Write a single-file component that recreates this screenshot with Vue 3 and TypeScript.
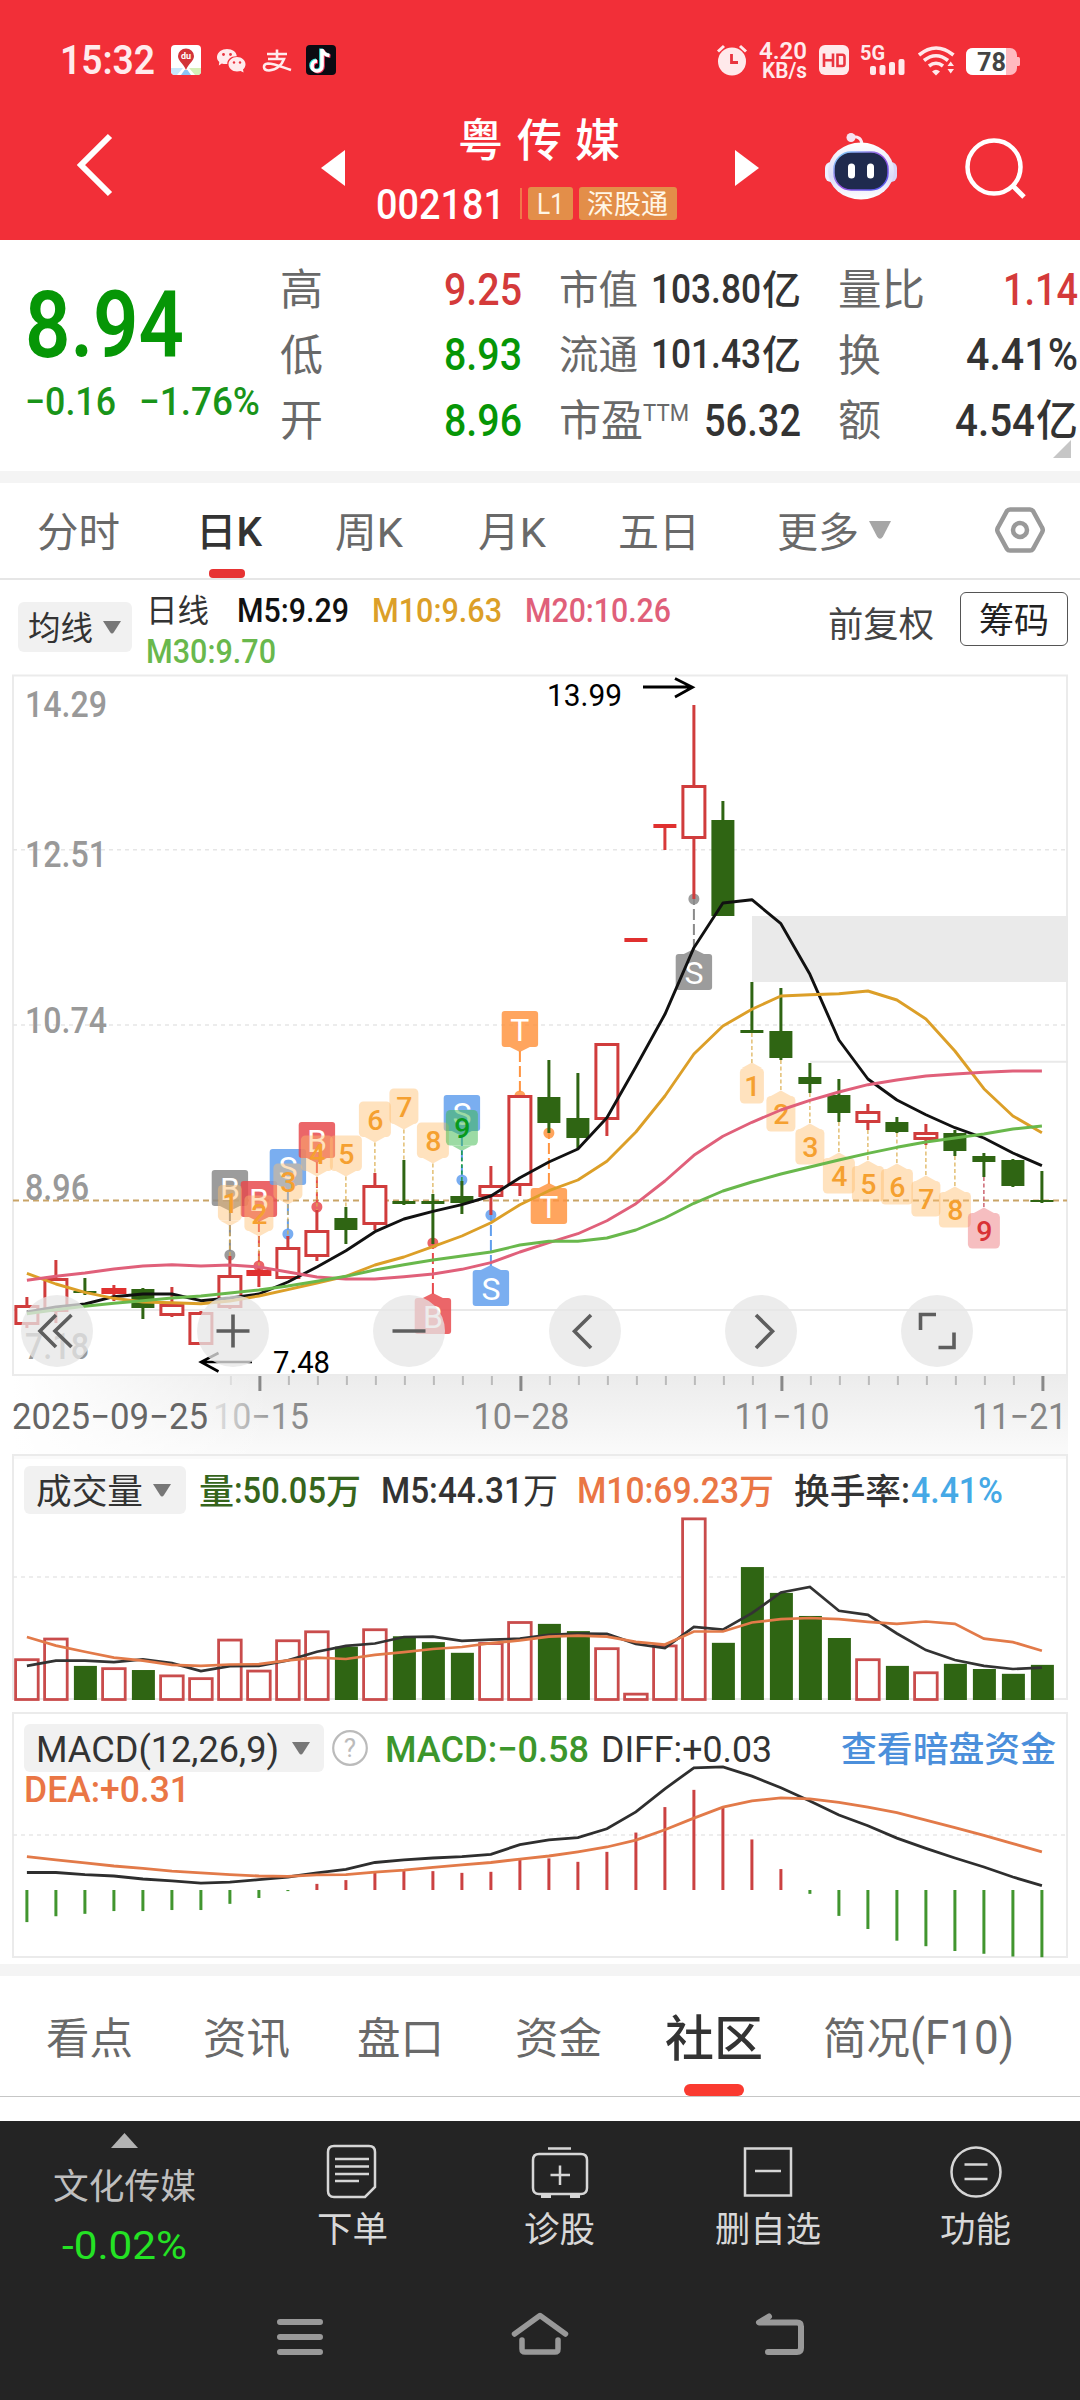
<script setup lang="ts">
import { h } from 'vue'

/* Single line of text set to an exact advance width. */
interface LabelProps {
  t: string
  w: number
  s: number
  b?: number
}
const Label = (p: LabelProps) => {
  const cjk = /[\u4e00-\u9fff]/.test(p.t)
  const base = Math.round(p.s * (cjk ? 0.76 : 0.711) * 10) / 10
  return h('svg', { width: p.w, height: base, style: 'display:block;flex:none;overflow:visible' }, [
    h(
      'text',
      {
        x: 0,
        y: base,
        textLength: p.w,
        lengthAdjust: 'spacingAndGlyphs',
        fill: 'currentColor',
        'font-family': "Roboto, 'Noto Sans CJK SC', sans-serif",
        'font-size': p.s,
        'font-weight': p.b ?? 400,
      },
      p.t,
    ),
  ])
}
Label.props = ['t', 'w', 's', 'b']

type Kind = 'r' | 'g' | 's'
const X = (i: number) => 26.9 + 29 * i

/* high, body top, body bottom, low, kind (r hollow red, s solid red, g green) */
const candles: [number, number, number, number, Kind][] = [
  [1297, 1305, 1325, 1328, 'r'], [1260, 1278, 1312, 1323, 'r'], [1278, 1291, 1293, 1295, 'g'],
  [1285, 1288, 1294, 1301, 's'], [1288, 1289, 1308, 1319, 'g'], [1287, 1304, 1316, 1317, 'r'],
  [1311, 1312, 1345, 1345, 'r'], [1256, 1275, 1308, 1309, 'r'], [1267, 1270, 1276, 1287, 's'],
  [1236, 1247, 1279, 1279, 'r'], [1210, 1230, 1257, 1261, 'r'], [1207, 1218, 1230, 1244, 'g'],
  [1173, 1185, 1225, 1230, 'r'], [1160, 1201, 1204, 1205, 'g'], [1194, 1201, 1204, 1244, 'g'],
  [1181, 1196, 1203, 1214, 'g'], [1166, 1185, 1197, 1215, 'r'], [1095, 1095, 1186, 1196, 'r'],
  [1060, 1097, 1123, 1133, 'g'], [1073, 1118, 1138, 1148, 'g'], [1043, 1043, 1120, 1136, 'r'],
  [938, 938, 942, 942, 's'], [824, 824, 828, 850, 's'], [705, 785, 839, 899, 'r'],
  [801, 820, 916, 916, 'g'], [982, 1030, 1033, 1033, 'g'], [988, 1031, 1058, 1060, 'g'],
  [1063, 1077, 1084, 1093, 'g'], [1079, 1095, 1113, 1122, 'g'], [1104, 1111, 1123, 1130, 'r'],
  [1117, 1122, 1132, 1133, 'g'], [1124, 1132, 1140, 1145, 'r'], [1130, 1133, 1151, 1156, 'g'],
  [1153, 1156, 1162, 1177, 'g'], [1159, 1160, 1186, 1187, 'g'], [1171, 1200, 1202, 1203, 'g'],
]

const toPoints = (ys: number[]) => ys.map((y, i) => `${X(i).toFixed(1)},${y.toFixed(1)}`).join(' ')

const ma5 = [1312, 1307, 1304, 1296.7, 1294, 1294, 1300.7, 1298, 1294, 1282, 1267, 1250.7, 1231.7, 1219, 1211.3, 1204.7, 1196, 1177.7, 1162, 1149, 1117.7, 1066.7, 1014.3, 947.7, 903, 899.7, 923.7, 974.3, 1040, 1079, 1100, 1114.7, 1127.7, 1138, 1153, 1165.7]
const ma10 = [1273.3, 1284, 1292.3, 1298.3, 1302, 1302.7, 1303.7, 1301, 1296, 1289.7, 1283, 1276.3, 1265, 1257, 1246.7, 1236, 1222.7, 1204.7, 1190.7, 1180, 1161.3, 1132, 1096, 1054, 1026, 1009.3, 996, 994.7, 993.7, 991, 1000, 1019, 1051, 1088.7, 1116, 1132.7]
const ma20 = [1280.3, 1276.3, 1273, 1269, 1266, 1264.7, 1266, 1265, 1267, 1272, 1277, 1279, 1279, 1276.7, 1274, 1269.3, 1262.7, 1252, 1242.7, 1233.7, 1220.7, 1203.7, 1181, 1155.3, 1136.3, 1122.3, 1110, 1100.3, 1092, 1084.7, 1080, 1076, 1074, 1072.3, 1071, 1071]
const ma30 = [1313.7, 1309.7, 1306.3, 1303.3, 1300.7, 1298, 1296, 1293, 1290, 1286, 1281.3, 1276.3, 1270, 1264.7, 1260, 1256, 1252, 1245, 1241.3, 1241.3, 1238, 1230, 1218, 1203.3, 1191, 1182, 1174, 1167, 1160, 1153.3, 1147.3, 1142, 1138, 1134, 1129, 1126]
const maLines = [
  { c: '#111', p: toPoints(ma5) },
  { c: '#dc9f28', p: toPoints(ma10) },
  { c: '#e0607a', p: toPoints(ma20) },
  { c: '#69b84c', p: toPoints(ma30) },
]

const GREY = '#8a8a8a'
const RED = '#e8494d'
const BLUE = '#619fee'
const ORANGE = '#ff9440'
/* trade marks: index, letter, box top, dot y, colour */
const marks: [number, string, number, number, string][] = [
  [7, 'B', 1170, 1255, GREY], [8, 'B', 1181, 1266, RED], [9, 'S', 1149, 1234, BLUE],
  [10, 'B', 1122, 1207, RED], [15, 'S', 1095, 1180, BLUE], [17, 'T', 1011, 1096, ORANGE],
  [18, 'T', 1188, 1133, ORANGE], [16, 'S', 1270, 1215, BLUE], [14, 'B', 1298, 1243, RED],
  [23, 'S', 954, 899, GREY],
]

/* nine-turn sequence: index, digit, box top, width, above? */
const turns: [number, number, number, number, boolean][] = [
  [7, 1, 1185, 24, true], [8, 2, 1195.5, 29, true], [9, 3, 1163.5, 29, true], [10, 4, 1135.5, 32, true],
  [11, 5, 1135.5, 32, true], [12, 6, 1101.5, 32, true], [13, 7, 1088.5, 29, true], [14, 8, 1122.5, 32, true],
  [15, 9, 1110, 32, true], [25, 1, 1068, 24, false], [26, 2, 1096, 29, false], [27, 3, 1129, 29, false],
  [28, 4, 1158, 32, false], [29, 5, 1166, 32, false], [30, 6, 1169, 32, false], [31, 7, 1181, 29, false],
  [32, 8, 1192, 32, false], [33, 9, 1213, 32, false],
]
const turnColor = (d: number, up: boolean) =>
  d !== 9 ? { bg: '#ffbe6e', fg: '#f5a030', ln: '#dcae50' }
    : up ? { bg: '#3cb94b', fg: '#089a1c', ln: '#089a1c' } : { bg: '#ee7f83', fg: '#d93236', ln: '#c04050' }
const notch = (x: number, top: number, hgt: number, down: boolean, n = 5) =>
  down
    ? `M${x - 10} ${top + hgt} L${x} ${top + hgt + n} L${x + 10} ${top + hgt}Z`
    : `M${x - 10} ${top} L${x} ${top - n} L${x + 10} ${top}Z`

const levels = [
  { t: '14.29', y: 717, w: 82 }, { t: '12.51', y: 867, w: 82 }, { t: '10.74', y: 1033, w: 82 },
  { t: '8.96', y: 1200, w: 64 }, { t: '7.18', y: 1359, w: 64 },
]
const ticks = Array.from({ length: 29 }, (_, k) => k + 7)
const dates = [
  { t: '2025−09−25', x: 12, w: 196, c: '#666' }, { t: '10−15', x: 213, w: 96, c: 'url(#fade)' },
  { t: '10−28', x: 473.5, w: 96, c: '#868686' }, { t: '11−10', x: 734.5, w: 95, c: '#868686' },
  { t: '11−21', x: 972, w: 95, c: '#868686' },
]

/* sub-chart values are stored in 1/2.904 px steps measured from y = 1440 */
const sy = (v: number) => 1440 + v / 2.904
const volumes: [number, Kind][] = [
  [638, 'r'], [578, 'r'], [656, 'g'], [664, 'r'], [668, 'g'], [685, 'r'], [693, 'r'], [581, 'r'], [671, 'r'],
  [583, 'r'], [557, 'r'], [600, 'g'], [551, 'r'], [570, 'g'], [587, 'g'], [618, 'g'], [591, 'r'], [530, 'r'],
  [534, 'g'], [555, 'g'], [606, 'r'], [738, 'r'], [598, 'r'], [229, 'r'], [589, 'g'], [369, 'g'], [444, 'g'],
  [511, 'g'], [575, 'g'], [638, 'r'], [656, 'g'], [676, 'r'], [650, 'g'], [665, 'g'], [679, 'g'], [653, 'g'],
]
const vol5 = toPoints([656, 641, 641, 645, 637, 648, 671, 657, 656, 640, 615, 598, 591, 572, 571, 583, 580, 577, 566, 562, 563, 592, 604, 543, 551, 503, 443, 427, 496, 508, 562, 610, 639, 656, 665, 661].map(sy))
const vol10 = toPoints([572, 597, 615, 632, 641, 653, 656, 652, 651, 640, 632, 636, 624, 616, 607, 601, 590, 582, 571, 568, 571, 586, 594, 556, 556, 530, 520, 517, 520, 528, 534, 527, 534, 577, 587, 612].map(sy))
const macd = [1400, 1383, 1376, 1368, 1368, 1365, 1365, 1347, 1330, 1310, 1289, 1278, 1256, 1249, 1252, 1257, 1254, 1217, 1215, 1225, 1196, 1140, 1066, 1016, 1068, 1160, 1246, 1318, 1382, 1420, 1454, 1470, 1484, 1492, 1500, 1502].map(sy)
const diff = toPoints([1256, 1256, 1262, 1266, 1275, 1280, 1287, 1284, 1277, 1269, 1257, 1247, 1227, 1219, 1214, 1210, 1203, 1175, 1161, 1155, 1129, 1080, 1013, 952, 949, 976, 1010, 1048, 1089, 1120, 1156, 1186, 1214, 1240, 1269, 1294].map(sy))
const dea = toPoints([1210, 1219, 1228, 1237, 1244, 1252, 1257, 1262, 1266, 1267, 1263, 1262, 1255, 1249, 1241, 1234, 1227, 1217, 1208, 1196, 1182, 1162, 1132, 1098, 1066, 1048, 1039, 1042, 1052, 1066, 1082, 1104, 1126, 1148, 1172, 1196].map(sy))

const floats = [
  { x: 57, d: 'M71.5 1315 L55 1331 L71.5 1347 M56 1315 L40 1331 L56 1347' },
  { x: 233, d: 'M216.5 1331 H249.5 M233 1314.5 V1347.5' },
  { x: 409, d: 'M392.5 1331 H425.5' },
  { x: 585, d: 'M591 1315 L574.5 1331.3 L591 1348' },
  { x: 761, d: 'M756 1315 L772.5 1331.3 L756 1348' },
  { x: 937, d: 'M920.5 1330 V1314.5 H936 M954 1332.5 V1347.5 H938.5' },
]
const tabs = [
  { t: '看点', w: 87 }, { t: '资讯', w: 87 }, { t: '盘口', w: 87 }, { t: '资金', w: 87 },
]
</script>

<template>
  <div class="app">
    <header class="top">
      <div class="status">
        <Label class="time" t="15:32" :w="95" :s="40" :b="600" />
        <svg class="apps" width="168" height="32" viewBox="0 0 168 32">
          <rect x="1" y="1" width="30" height="30" rx="4" fill="#fff" />
          <path d="M1 24H31V27Q31 31 27 31H5Q1 31 1 27Z" fill="#c8e6fb" />
          <path d="M19 24H31V27Q31 31 27 31H23Z" fill="#d5f0b8" />
          <path d="M13 24H19L25 31H7Z" fill="#fff" /><path d="M14.500 26H17.500L21 31H11Z" fill="#8cc4f5" />
          <path d="M16 26C13 19 8 17 8 12a8 7.500 0 0 1 16 0C24 17 19 19 16 26Z" fill="#d33338" />
          <text x="11" y="15" font-family="Roboto" font-size="9" font-weight="700" fill="#fff">du</text>
          <g fill="#ffebed">
            <path d="M57 5c5.500 0 9.500 3 9.800 7.200C61 12 57 15.500 57.300 20c-2 .3-4 0-5.500-.5l-3 2 .5-3.500C47.500 16.500 46.800 14.500 47 12.500 47.500 8 52 5 57 5Z" />
            <path d="M67 13c4.800 0 8.500 3.300 8.500 7.300 0 2.200-1 4-2.500 5.200l.6 3-3-1.500c-1 .3-2.200.5-3.600.5-4.800 0-8.500-3.200-8.500-7.200S62.200 13 67 13Z" />
          </g>
          <g fill="#e9343f"><circle cx="53.500" cy="10.500" r="1.400" /><circle cx="60.500" cy="10.500" r="1.400" /><circle cx="64" cy="18.500" r="1.200" /><circle cx="70" cy="18.500" r="1.200" /></g>
          <g fill="none" stroke="#ffebed" stroke-width="2.600">
            <path d="M97 10H117M107 5.500V14.500M98 15H114C112 20.500 107 26 99 26.500 92.500 26.500 92.500 20 98 19.500 104 19.500 112 23 121 26" />
          </g>
          <rect x="136" y="1" width="30" height="30" rx="4" fill="#0c0a12" />
          <g fill="none" stroke-width="3.600">
            <path d="M152 5V22A5 5 0 1 1 147 17M152 5.500C153 9 156 11 159.500 11.500" stroke="#3ce8e2" transform="translate(-1 -.6)" />
            <path d="M152 5V22A5 5 0 1 1 147 17M152 5.500C153 9 156 11 159.500 11.500" stroke="#f5365c" transform="translate(1 .8)" />
            <path d="M152 5V22A5 5 0 1 1 147 17M152 5.500C153 9 156 11 159.500 11.500" stroke="#fff" />
          </g>
        </svg>
        <svg class="alarm" width="32" height="32" viewBox="0 0 32 32">
          <circle cx="16" cy="17.500" r="14" fill="#ffe9eb" />
          <path d="M2 7.500L8 2M30 7.500L24 2" stroke="#ffe9eb" stroke-width="3" />
          <path d="M15.500 10V18.500H22" fill="none" stroke="#e9343f" stroke-width="2.800" />
        </svg>
        <div class="rate">
          <Label t="4.20" :w="48" :s="24" :b="600" />
          <Label t="KB/s" :w="45" :s="21.5" :b="600" />
        </div>
        <svg class="sys" width="204" height="32" viewBox="0 0 204 32">
          <rect x="1" y="1" width="30" height="30" rx="6" fill="#ffe9eb" />
          <path d="M6 9.500V23M15 9.500V23M6 16.300H15M19.500 10.800H24.500Q26.500 10.800 26.500 13V19.800Q26.500 22 24.500 22H19.500Z" fill="none" stroke="#e9343f" stroke-width="2.600" />
          <text x="42" y="15.500" font-family="Roboto" font-size="20" font-weight="700" fill="#ffe9eb" textLength="25" lengthAdjust="spacingAndGlyphs">5G</text>
          <g fill="#ffe9eb"><rect x="52" y="22" width="6" height="9" rx="2" /><rect x="61.500" y="21" width="6" height="10" rx="2" /><rect x="71" y="18" width="6" height="13" rx="2" /><rect x="80.500" y="15" width="6" height="16" rx="2" /></g>
          <g fill="none" stroke="#ffe9eb" stroke-width="3.600">
            <path d="M101 11Q118 -3 135.500 11" /><path d="M106 16.500Q118 7 130 16.500" /><path d="M111 22Q118 16.500 125 22" />
          </g>
          <path d="M114 27.500Q118 24 122 27.500L118 31.500Z" fill="#ffe9eb" />
          <path d="M129.500 22L132.700 17.500 136 22ZM129.500 25L132.700 29.500 136 25Z" fill="#ffe9eb" />
          <rect x="148" y="4" width="51" height="27" rx="7" fill="#ffb9bf" /><path d="M155 4H188V31H155Q148 31 148 24V11Q148 4 155 4Z" fill="#fff" />
          <path d="M199 13h1.500q1.500 0 1.500 1.500v6q0 1.500-1.500 1.500H199z" fill="#ffb9bf" />
          <text x="159" y="27" font-family="Roboto" font-size="26" font-weight="700" fill="#444" textLength="29" lengthAdjust="spacingAndGlyphs">78</text>
        </svg>
      </div>
      <div class="title-row">
        <svg class="back" width="38" height="66" viewBox="0 0 38 66"><path d="M35 4L6 33 35 62" fill="none" stroke="#fff" stroke-width="6" /></svg>
        <svg class="prev" width="24" height="36"><path d="M24 0V36L0 18Z" fill="#fff" /></svg>
        <div class="stock">
          <div class="stock-name"><Label t="粤" :w="45" :s="45" :b="500" /><Label t="传" :w="45" :s="45" :b="500" /><Label t="媒" :w="45" :s="45" :b="500" /></div>
          <div class="stock-code">
            <Label t="002181" :w="129" :s="42.5" :b="500" />
            <i class="bar"></i>
            <span class="badge l1"><Label t="L1" :w="27" :s="29" /></span>
            <span class="badge szt"><Label t="深股通" :w="81" :s="27" /></span>
          </div>
        </div>
        <svg class="next" width="24" height="36"><path d="M0 0V36L24 18Z" fill="#fff" /></svg>
        <svg class="robot" width="74" height="70" viewBox="0 0 74 70">
          <defs>
            <linearGradient id="shell" x1="0" y1="0" x2="0" y2="1"><stop offset="0" stop-color="#fff" /><stop offset=".6" stop-color="#dcdcf8" /><stop offset="1" stop-color="#fff" /></linearGradient>
            <linearGradient id="rim" x1="0" y1="0" x2="1" y2="1"><stop offset="0" stop-color="#7fe0ff" /><stop offset=".5" stop-color="#9a50e0" /><stop offset="1" stop-color="#4a5cf0" /></linearGradient>
          </defs>
          <path d="M27 6Q38 4 38 15" fill="none" stroke="#fbe9f4" stroke-width="3" /><circle cx="27" cy="6.500" r="4.500" fill="#f6e3f2" />
          <rect x="1" y="31" width="14" height="20" rx="6" fill="#eef0ff" /><rect x="59" y="31" width="14" height="20" rx="6" fill="#d9d4f6" />
          <ellipse cx="37" cy="40" rx="33" ry="28.500" fill="url(#shell)" />
          <rect x="10" y="21" width="54" height="38" rx="17" fill="#1f2a4e" stroke="url(#rim)" stroke-width="1.500" />
          <rect x="24" y="32.500" width="7" height="15" rx="3.500" fill="#fff" /><rect x="43" y="32.500" width="7" height="15" rx="3.500" fill="#fff" />
        </svg>
        <svg class="search" width="62" height="62" viewBox="0 0 62 62"><circle cx="30" cy="30" r="26.500" fill="none" stroke="#fff" stroke-width="4.500" /><path d="M49 49L60 60" stroke="#fff" stroke-width="5" /></svg>
      </div>
    </header>

    <section class="quote">
      <div class="price">
        <Label class="green" t="8.94" :w="159" :s="92" :b="600" />
        <div class="change"><Label t="−0.16" :w="91" :s="39" :b="500" /><Label t="−1.76%" :w="121" :s="39" :b="500" /></div>
      </div>
      <div class="col c2">
        <div class="row"><Label t="高" :w="43" :s="43" /><Label class="red" t="9.25" :w="78" :s="45" :b="500" /></div>
        <div class="row"><Label t="低" :w="43" :s="43" /><Label class="green" t="8.93" :w="78" :s="45" :b="500" /></div>
        <div class="row"><Label t="开" :w="43" :s="43" /><Label class="green" t="8.96" :w="78" :s="45" :b="500" /></div>
      </div>
      <div class="col c3">
        <div class="row"><Label t="市值" :w="79" :s="40" /><span class="val"><Label t="103.80" :w="110" :s="40" :b="500" /><Label t="亿" :w="39" :s="40" :b="500" /></span></div>
        <div class="row"><Label t="流通" :w="79" :s="40" /><span class="val"><Label t="101.43" :w="110" :s="40" :b="500" /><Label t="亿" :w="39" :s="40" :b="500" /></span></div>
        <div class="row"><span class="pe"><Label t="市盈" :w="84" :s="43" /><Label class="ttm" t="TTM" :w="46" :s="24" :b="400" /></span><Label class="dark" t="56.32" :w="97" :s="45" :b="500" /></div>
      </div>
      <div class="col c4">
        <div class="row"><Label t="量比" :w="87" :s="43" /><Label class="red" t="1.14" :w="75" :s="45" :b="500" /></div>
        <div class="row"><Label t="换" :w="43" :s="43" /><Label class="dark" t="4.41%" :w="112" :s="45" :b="500" /></div>
        <div class="row"><Label t="额" :w="43" :s="43" /><span class="val"><Label t="4.54" :w="80" :s="45" :b="500" /><Label t="亿" :w="42" :s="43" :b="500" /></span></div>
        <svg class="fold" width="18" height="18"><path d="M18 0V18H0Z" fill="#c6c6c6" /></svg>
      </div>
    </section>

    <nav class="periods">
      <span><Label t="分时" :w="83" :s="41" /></span>
      <span class="on"><Label t="日K" :w="66" :s="40" :b="500" /></span>
      <span><Label t="周K" :w="68" :s="41" /></span>
      <span><Label t="月K" :w="68" :s="41" /></span>
      <span><Label t="五日" :w="82" :s="41" /></span>
      <span class="more"><Label t="更多" :w="82" :s="41" /><svg width="22" height="18"><path d="M0 0H22L14 15.500Q11 20 8 15.500Z" fill="#a6a6a6" /></svg></span>
      <span class="gear"><svg width="50" height="48" viewBox="0 0 50 48"><path d="M15 3.500H35Q37 3.500 38 5L47 21.500Q48.500 24 47 26.500L38 43Q37 44.500 35 44.500H15Q13 44.500 12 43L3 26.500Q1.500 24 3 21.500L12 5Q13 3.500 15 3.500Z" fill="none" stroke="#999" stroke-width="4.500" /><circle cx="25" cy="24" r="7" fill="none" stroke="#999" stroke-width="4.500" /></svg></span>
    </nav>

    <section class="ma">
      <div class="pick avg"><Label t="均线" :w="65" :s="32.5" /><svg width="18" height="13"><path d="M0 0H18L11 11Q9 14 7 11Z" fill="#777" /></svg></div>
      <div class="legend">
        <div class="line"><Label class="lg-name" t="日线" :w="63" :s="31.5" /><Label class="m5" t="M5:9.29" :w="112" :s="34" :b="500" /><Label class="m10" t="M10:9.63" :w="130" :s="34" :b="500" /><Label class="m20" t="M20:10.26" :w="146" :s="34" :b="500" /></div>
        <div class="line"><Label class="m30" t="M30:9.70" :w="130" :s="34" :b="500" /></div>
      </div>
      <Label class="fq" t="前复权" :w="106" :s="35.5" />
      <div class="chips"><Label t="筹码" :w="70" :s="35" /></div>
    </section>

    <svg class="kline" width="1080" height="780" viewBox="0 674 1080 780" font-family="Roboto, sans-serif">
      <defs>
        <linearGradient id="axis" x1="0" y1="0" x2="0" y2="1"><stop offset="0" stop-color="#ececec" /><stop offset="1" stop-color="#fafafa" /></linearGradient>
        <linearGradient id="veil" x1="0" y1="0" x2="1" y2="0"><stop offset="0" stop-color="#fff" /><stop offset="1" stop-color="#fff" stop-opacity="0" /></linearGradient>
        <linearGradient id="fade" x1="0" y1="0" x2="1" y2="0"><stop offset="0" stop-color="#e4e4e4" /><stop offset=".6" stop-color="#999" /><stop offset="1" stop-color="#868686" /></linearGradient>
      </defs>
      <rect x="13" y="1376" width="1055" height="78" fill="url(#axis)" />
      <rect x="12" y="1376" width="260" height="78" fill="url(#veil)" />
      <rect x="13" y="675.500" width="1054" height="699.500" fill="none" stroke="#ebebeb" stroke-width="2" />
      <path d="M13 849.700H1067M13 1025H1067" stroke="#e6e6e6" stroke-width="1.500" stroke-dasharray="4 4" />
      <rect x="752" y="916" width="316" height="66" fill="#eaeaea" />
      <path d="M810 1061.700H1068M13 1310H1068" stroke="#e9e9e9" stroke-width="2" />
      <path d="M13 1200.500H1067" stroke="#c9a467" stroke-width="1.800" stroke-dasharray="6 4" />

      <text v-for="l in levels" :key="l.t" x="25" :y="l.y" :textLength="l.w" lengthAdjust="spacingAndGlyphs" font-size="36" font-weight="500" fill="#999">{{ l.t }}</text>

      <g v-for="m in marks" :key="'m' + m[0]">
        <path :d="`M${X(m[0])} ${m[2] < m[3] ? m[2] + 40 : m[2] - 4}V${m[3]}`" :stroke="m[4]" stroke-width="2" stroke-dasharray="11 4" />
        <circle :cx="X(m[0])" :cy="m[3]" r="5.500" :fill="m[4]" opacity=".85" />
        <g opacity=".84" :fill="m[4]">
          <rect :x="X(m[0]) - 18.200" :y="m[2]" width="36.400" height="36" rx="3" />
          <path :d="notch(X(m[0]), m[2], 36, m[2] < m[3])" />
        </g>
        <text :x="X(m[0])" :y="m[2] + 29.500" text-anchor="middle" font-size="32" fill="#fff">{{ m[1] }}</text>
      </g>

      <g v-for="t in turns" :key="'t' + t[0]">
        <path :d="t[4] ? `M${X(t[0])} ${t[2] + 41}V${candles[t[0]][0]}` : `M${X(t[0])} ${candles[t[0]][3]}V${t[2] - 5}`" :stroke="turnColor(t[1], t[4]).ln" stroke-width="1.200" stroke-dasharray="4 2.500" />
        <g :fill="turnColor(t[1], t[4]).bg" :opacity="t[1] === 9 ? 0.5 : 0.44">
          <rect :x="X(t[0]) - t[3] / 2" :y="t[2]" :width="t[3]" height="35.500" rx="4.500" />
          <path :d="notch(X(t[0]), t[2], 35.5, t[4], 5.5)" />
        </g>
        <text :x="X(t[0]) + 0.500" :y="t[2] + 28" text-anchor="middle" font-size="28.500" font-weight="500" :fill="turnColor(t[1], t[4]).fg">{{ t[1] }}</text>
      </g>

      <g v-for="(c, i) in candles" :key="'c' + i">
        <template v-if="c[4] === 'r'">
          <path :d="`M${X(i)} ${c[0]}V${c[1] + 1}M${X(i)} ${c[2] - 1}V${c[3]}`" stroke="#d03c3c" stroke-width="3" />
          <rect :x="X(i) - 11" :y="c[1] + 1.500" width="22" :height="c[2] - c[1] - 3" fill="#fff" stroke="#d03c3c" stroke-width="3" />
        </template>
        <template v-else>
          <path :d="`M${X(i)} ${c[0]}V${c[3]}`" :stroke="c[4] === 'g' ? '#2f6513' : '#d8393a'" stroke-width="3" />
          <rect :x="X(i) - (c[4] === 'g' || c[2] - c[1] < 5 ? 11.5 : 12.5)" :y="c[1]" :width="c[4] === 'g' || c[2] - c[1] < 5 ? 23 : 25" :height="c[2] - c[1]" :fill="c[4] === 'g' ? '#2f6513' : '#e0302f'" />
        </template>
      </g>
      <polyline v-for="l in maLines" :key="l.c" :points="l.p" fill="none" :stroke="l.c" stroke-width="2.900" stroke-linejoin="round" />

      <text x="547" y="706" font-size="31" textLength="75" lengthAdjust="spacingAndGlyphs">13.99</text>
      <path d="M643 687H692M675 678.500L692.500 687.300 675 697" fill="none" stroke="#000" stroke-width="2.800" />
      <text x="273" y="1372.500" font-size="31" textLength="57" lengthAdjust="spacingAndGlyphs">7.48</text>
      <path d="M252 1362H201M218.500 1353L201 1362 218.500 1371.500" fill="none" stroke="#000" stroke-width="2.600" />

      <path v-for="i in ticks" :key="'k' + i" :d="`M${X(i) + 1} 1376V${(i + 1) % 9 === 0 ? 1391 : 1385}`" :stroke="(i + 1) % 9 === 0 ? '#888' : i === 7 ? '#ddd' : '#bbb'" :stroke-width="(i + 1) % 9 === 0 ? 3 : 2" />
      <text v-for="d in dates" :key="d.t" :x="d.x" y="1429" :textLength="d.w" lengthAdjust="spacingAndGlyphs" font-size="36" :fill="d.c">{{ d.t }}</text>

      <g v-for="f in floats" :key="f.x">
        <circle :cx="f.x" cy="1331" r="36" fill="#e6e6e6" opacity=".76" />
        <path :d="f.d" fill="none" stroke="#5e5e5e" stroke-width="3.600" />
      </g>
    </svg>

    <section class="sub vol">
      <svg class="plot" width="1080" height="250" viewBox="0 1454 1080 250">
        <rect x="13" y="1454" width="1055" height="5" fill="#fafafa" />
        <rect x="13" y="1455" width="1054" height="244" fill="none" stroke="#ebebeb" stroke-width="2" />
        <path d="M13 1577H1067" stroke="#e8e8e8" stroke-width="1.500" stroke-dasharray="4 4" />
        <g v-for="(v, i) in volumes" :key="i">
          <rect v-if="v[1] === 'g'" :x="X(i) - 11" :y="sy(v[0])" width="23" :height="1700 - sy(v[0])" fill="#2f6513" />
          <rect v-else :x="X(i) - 11.300" :y="sy(v[0])" width="22.600" :height="1699.500 - sy(v[0])" fill="#fff" stroke="#c94c4c" stroke-width="2.800" />
        </g>
        <polyline :points="vol5" fill="none" stroke="#333" stroke-width="2.700" />
        <polyline :points="vol10" fill="none" stroke="#e27a49" stroke-width="2.700" />
      </svg>
      <div class="info">
        <div class="pick volpick"><Label t="成交量" :w="107" :s="35.5" /><svg width="18" height="13"><path d="M0 0H18L11 11Q9 14 7 11Z" fill="#777" /></svg></div>
        <span class="grp v1"><Label t="量" :w="35" :s="35" :b="500" /><Label t=":50.05" :w="92" :s="37" :b="500" /><Label t="万" :w="35" :s="35" :b="500" /></span>
        <span class="grp v2"><Label t="M5:44.31" :w="142" :s="37" :b="500" /><Label t="万" :w="35" :s="35" /></span>
        <span class="grp v3"><Label t="M10:69.23" :w="162" :s="37" :b="500" /><Label t="万" :w="35" :s="35" :b="500" /></span>
        <span class="grp v4"><Label t="换手率" :w="107" :s="35.5" :b="500" /><Label t=":" :w="9" :s="37" :b="500" /></span>
        <Label class="v5" t="4.41%" :w="92" :s="37" :b="500" />
      </div>
    </section>

    <section class="sub macd">
      <svg class="plot" width="1080" height="260" viewBox="0 1704 1080 260">
        <rect x="13" y="1713" width="1054" height="244" fill="none" stroke="#ebebeb" stroke-width="2" />
        <path d="M13 1835H1067" stroke="#e8e8e8" stroke-width="1.500" stroke-dasharray="4 4" />
        <path v-for="(y, i) in macd" :key="i" :d="`M${X(i)} 1890V${y}`" :stroke="y > 1890 ? '#41952f' : '#cb4141'" stroke-width="3" />
        <polyline :points="diff" fill="none" stroke="#2e2e2e" stroke-width="2.800" />
        <polyline :points="dea" fill="none" stroke="#e27a49" stroke-width="2.800" />
      </svg>
      <div class="info">
        <div class="pick macdpick"><Label t="MACD(12,26,9)" :w="243" :s="37.5" /><svg width="18" height="13"><path d="M0 0H18L11 11Q9 14 7 11Z" fill="#777" /></svg></div>
        <svg class="help" width="36" height="36"><circle cx="18" cy="18" r="16.800" fill="none" stroke="#bbb" stroke-width="2.200" /><text x="18" y="27" text-anchor="middle" font-family="Roboto" font-size="26" fill="#bbb">?</text></svg>
        <Label class="d1" t="MACD:−0.58" :w="204" :s="37.5" :b="500" />
        <Label class="d2" t="DIFF:+0.03" :w="171" :s="37.5" />
        <Label class="d3" t="查看暗盘资金" :w="215" :s="35.5" :b="500" />
      </div>
      <div class="dea"><Label t="DEA:+0.31" :w="166" :s="37" :b="500" /></div>
    </section>

    <nav class="pages">
      <span v-for="t in tabs" :key="t.t"><Label :t="t.t" :w="t.w" :s="43.5" /></span>
      <span class="on"><Label t="社区" :w="98" :s="49" :b="500" /></span>
      <span class="f10"><Label t="简况" :w="87" :s="43.5" /><Label t="(F10)" :w="104" :s="48" /></span>
    </nav>

    <footer class="bottom">
      <div class="tools">
        <div class="index">
          <svg width="27" height="15"><path d="M13.500 0L27 15H0Z" fill="#b3b3b3" /></svg>
          <Label class="idx-name" t="文化传媒" :w="143" :s="35.500" />
          <Label class="idx-val" t="-0.02%" :w="125" :s="38.500" />
        </div>
        <div class="tool">
          <svg width="60" height="58" viewBox="0 0 60 58" fill="none" stroke="#d6d6d6" stroke-width="2.500"><path d="M12 3H47Q53 3 53 9V44L43 54H12Q6 54 6 48V9Q6 3 12 3Z" /><path d="M13 16H47M13 23.500H47M13 31H47M13 38H37" /></svg>
          <Label t="下单" :w="71" :s="35.500" />
        </div>
        <div class="tool">
          <svg width="60" height="58" viewBox="0 0 60 58" fill="none" stroke="#d6d6d6" stroke-width="2.500"><path d="M9 11H51Q57 11 57 17V45Q57 51 51 51H9Q3 51 3 45V17Q3 11 9 11ZM18 5.500H41M30 22.500V42M20.500 32H40" /><path d="M11 53.500H21M40 53.500H50" stroke-width="3" /></svg>
          <Label t="诊股" :w="71" :s="35.500" />
        </div>
        <div class="tool">
          <svg width="60" height="58" viewBox="0 0 60 58" fill="none" stroke="#d6d6d6" stroke-width="2.500"><path d="M7 5.500H53V52.500H7ZM17 28H43" /></svg>
          <Label t="删自选" :w="106" :s="35.500" />
        </div>
        <div class="tool">
          <svg width="60" height="58" viewBox="0 0 60 58" fill="none" stroke="#d6d6d6" stroke-width="2.500"><circle cx="30" cy="29" r="24.500" /><path d="M18.500 21.500H41.500M18.500 36H41.500" /></svg>
          <Label t="功能" :w="71" :s="35.500" />
        </div>
      </div>
      <div class="sysnav">
        <svg width="60" height="50" viewBox="0 0 60 50" fill="none" stroke="#999" stroke-width="6" stroke-linecap="round"><path d="M10 10H50M10 25H50M10 40H50" /></svg>
        <svg width="60" height="50" viewBox="0 0 60 50" fill="none" stroke="#999" stroke-width="5.500" stroke-linecap="round" stroke-linejoin="round"><path d="M4.500 22L30 3.500 55.500 22M12 28V37Q12 40 15 40H45Q48 40 48 37V28" /></svg>
        <svg width="60" height="50" viewBox="0 0 60 50" fill="none" stroke="#999" stroke-width="6" stroke-linecap="round" stroke-linejoin="round"><path d="M19 4.500L9 10.500H47Q51 10.500 51 14.500V36Q51 40 47 40H18" /></svg>
      </div>
    </footer>
  </div>
</template>

<style>
body { background: #fff; }
</style>

<style scoped>
.app { width: 1080px; height: 2400px; overflow: hidden; background: #fff; color: #333; font-family: Roboto, 'Noto Sans CJK SC', sans-serif; }
.app svg { display: block; flex: none; }
.top { height: 240px; background: #f22f38; color: #fff; }
.status { display: flex; align-items: center; height: 74px; padding: 23px 0 0 60px; color: #ffebed; }
.apps { margin-left: 15px; }
.alarm { margin-left: 378px; }
.rate { display: flex; flex-direction: column; align-items: flex-end; gap: 4px; margin-left: 10px; width: 49px; }
.sys { margin-left: 11px; }
.title-row { display: flex; align-items: flex-start; height: 143px; }
.back { margin: 35px 0 0 75px; }
.prev { margin: 53px 0 0 208px; }
.stock { width: 303px; margin: 26px 0 0 29px; }
.stock-name { display: flex; gap: 13.500px; margin-left: 84px; }
.stock-code { display: flex; align-items: center; height: 33px; margin-top: 30px; margin-left: 1.500px; }
.bar { width: 2px; height: 31px; margin: 0 6px 0 15.500px; background: #f2774a; }
.badge { display: flex; align-items: center; justify-content: center; height: 33px; border-radius: 3px; background: #e38e49; color: #fff6e6; }
.l1 { width: 45px; }
.szt { width: 99px; margin-left: 6px; }
.next { margin: 53px 0 0 58px; }
.robot { margin: 34px 0 0 65px; }
.search { margin: 40px 0 0 66px; }

.quote { display: flex; height: 231px; border-bottom: 12px solid #f4f4f4; color: #696969; }
.price { width: 280px; padding: 52px 0 0 25px; box-sizing: border-box; }
.change { display: flex; gap: 23px; margin-top: 30px; color: #199419; }
.col { padding-top: 16px; box-sizing: border-box; }
.row { display: flex; align-items: center; justify-content: space-between; height: 65.500px; }
.c2 { width: 242px; }
.c3 { width: 242px; margin-left: 37px; }
.c4 { width: 242px; margin-left: 37px; position: relative; }
.val { display: flex; align-items: center; gap: 1px; color: #333; }
.pe { display: flex; align-items: flex-start; }
.ttm { margin-top: 1px; }
.c4 .row { padding-right: 2px; }
.fold { position: absolute; right: 9px; top: 200px; }
.red { color: #d43a3a; }
.green { color: #069606; }
.dark { color: #333; }

.periods { display: grid; grid-template-columns: 156px 147px 132px 154px 139px 214px 138px; height: 97px; border-bottom: 2px solid #e6e6e6; box-sizing: border-box; color: #696969; }
.periods span { display: flex; align-items: center; justify-content: center; padding-top: 2px; }
.periods .on { color: #333; position: relative; padding-right: 2px; }
.periods .on::after { content: ''; position: absolute; left: 53px; bottom: 0; width: 36px; height: 9px; border-radius: 4px; background: #e73333; }
.periods .more { gap: 10px; padding-right: 2px; }
.periods .more svg:last-child { margin-bottom: 4px; }
.periods .gear { padding: 0 0 2px 17px; }

.ma { display: flex; height: 94px; }
.pick { display: flex; align-items: center; gap: 10px; background: #f1f1f1; border-radius: 6px; color: #333; box-sizing: border-box; }
.avg { width: 114px; height: 50px; margin: 22px 0 0 18px; padding-left: 10px; }
.legend { width: 530px; margin: 13px 0 0 14px; }
.line { display: flex; align-items: center; height: 34px; }
.line + .line { margin-top: 7px; }
.m5 { margin-left: 28px; color: #111; }
.m10 { margin-left: 23px; color: #dc9f28; }
.m20 { margin-left: 23px; color: #e0607a; }
.m30 { color: #69b84c; }
.fq { margin: 30px 0 0 152px; color: #444; }
.chips { display: flex; align-items: center; justify-content: center; width: 108px; height: 54px; margin: 12px 0 0 26px; border: 1px solid #555; border-radius: 6px; box-sizing: border-box; color: #222; }

.sub { display: grid; grid-template-columns: 1080px; }
.plot { grid-area: 1 / 1; }
.vol { height: 250px; }
.macd { height: 260px; border-bottom: 12px solid #f4f4f4; }
.info { grid-area: 1 / 1; display: flex; align-items: center; height: 48px; }
.vol .info { margin-top: 12px; }
.macd .info { margin-top: 20px; }
.volpick { width: 162px; height: 48px; margin-left: 24px; padding-left: 12px; }
.grp { display: flex; align-items: center; }
.v1 { margin-left: 13px; color: #36651c; }
.v2 { margin-left: 20px; color: #333; }
.v3 { margin-left: 19px; color: #ea7645; }
.v4 { margin-left: 20px; color: #333; }
.v5 { margin-left: 1px; color: #45a9e6; }
.macdpick { width: 300px; height: 48px; margin-left: 24px; padding-left: 12px; gap: 13px; }
.help { margin-left: 8px; }
.d1 { margin-left: 17px; color: #3c962c; }
.d2 { margin-left: 12px; color: #333; }
.d3 { margin-left: 69px; color: #4b8fdb; }
.dea { grid-area: 1 / 1; margin: 72px 0 0 24px; color: #ea7645; }

.pages { display: grid; grid-template-columns: 179px 134px 174px 142px 169px 240px; height: 121px; border-bottom: 1px solid #c6c6c6; box-sizing: border-box; color: #696969; }
.pages span { display: flex; align-items: center; justify-content: center; padding-top: 3px; }
.pages .on { position: relative; color: #333; }
.pages .on::after { content: ''; position: absolute; left: 55px; bottom: 0; width: 60px; height: 12px; border-radius: 6px; background: #fa3a30; }

.bottom { height: 279px; margin-top: 24px; background: #242424; }
.tools { display: grid; grid-template-columns: 249px 206px 209px 207px 209px; height: 180px; color: #d8d8d8; }
.index, .tool { display: flex; flex-direction: column; align-items: center; }
.index { padding-top: 12px; }
.idx-name { margin-top: 24px; color: #bfbfbf; }
.idx-val { margin-top: 33px; color: #24e324; }
.tool { padding-top: 22px; gap: 14px; }
.sysnav { display: grid; grid-template-columns: 240px 240px 240px; justify-content: center; justify-items: center; padding-top: 11px; }
</style>
